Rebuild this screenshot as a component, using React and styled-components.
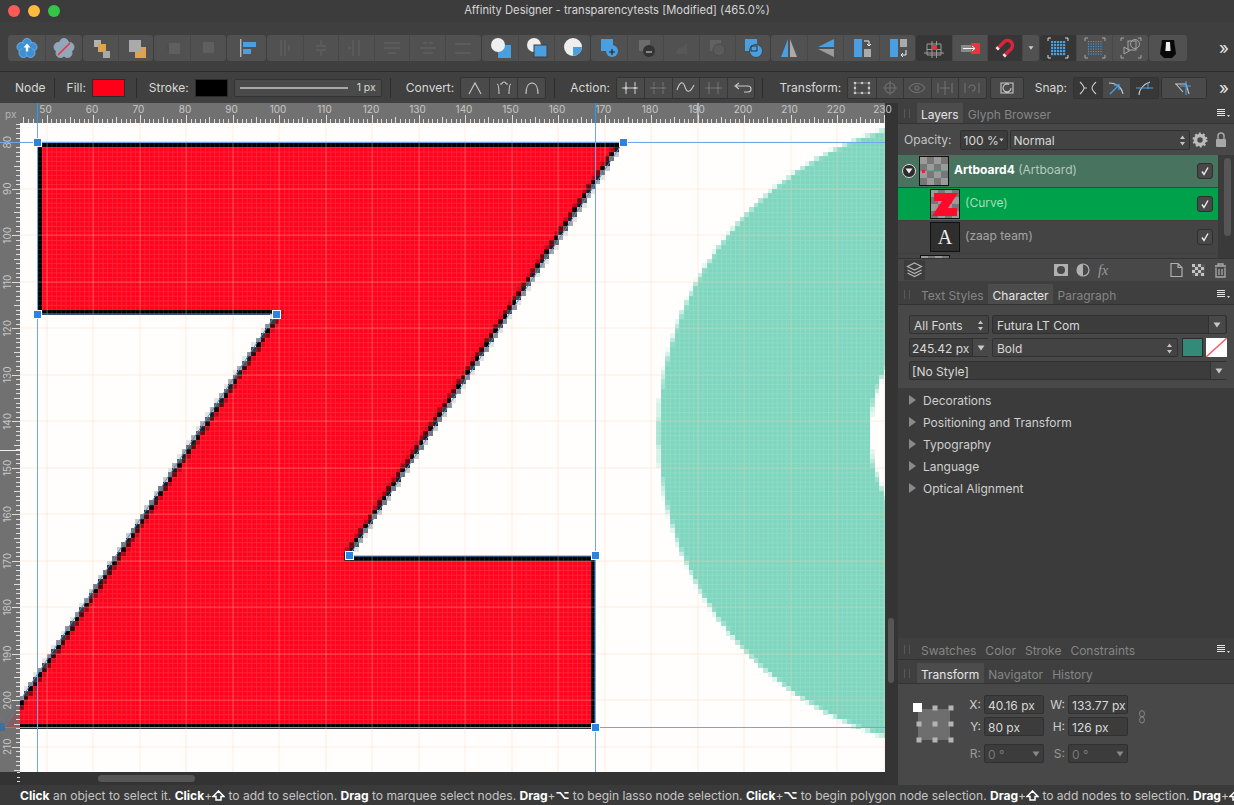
import React from 'react';
import styled, {createGlobalStyle} from 'styled-components';

const GlobalStyle = createGlobalStyle`
  html, body { margin: 0; padding: 0; background: #3a3a3a; }
  body { font-family: Inter, "Noto Sans", sans-serif; font-size: 12px; color: #d0d0d0; }
`;

const Window = styled.div`
  width: 1234px;
  height: 805px;
  display: flex;
  flex-direction: column;
  overflow: hidden;
  background: #3d3d3d;
`;

const TitleBar = styled.div`
  height: 22px;
  flex: none;
  box-sizing: border-box;
  padding-bottom: 2px;
  display: flex;
  align-items: center;
  justify-content: center;
  position: relative;
  background: #3c3c3c;
  color: #d6d6d6;
  font-size: 11.2px;
`;

const Lights = styled.div`
  position: absolute;
  left: 8px;
  top: 5px;
  display: flex;
  gap: 8px;
`;

const Light = styled.span`
  width: 12px;
  height: 12px;
  border-radius: 50%;
  background: ${p => p.$c};
`;

const Toolbar = styled.div`
  height: 50px;
  flex: none;
  box-sizing: border-box;
  padding: 13px 0 11px 8px;
  display: flex;
  gap: 1px;
  background: #3f3f3f;
  border-bottom: 1px solid #2d2d2d;
`;

const ToolGroup = styled.div`
  display: flex;
  flex: none;
  height: 26px;
  border-radius: 3px;
  overflow: hidden;
  background: #515151;
`;

const ToolButton = styled.div`
  width: ${p => p.$w}px;
  flex: none;
  box-sizing: border-box;
  display: flex;
  align-items: center;
  justify-content: center;
  background: ${p => (p.$dark ? '#363636' : 'transparent')};
  & + & { border-left: 1px solid #474747; }
`;

const More = styled.div`
  margin-left: auto;
  width: 15px;
  flex: none;
  color: #e8e8e8;
  font-size: 17px;
  line-height: 26px;
`;

const ContextBar = styled.div`
  height: 31px;
  flex: none;
  box-sizing: border-box;
  display: flex;
  align-items: center;
  background: #404040;
  color: #d8d8d8;
  font-size: 12px;
`;

const Label = styled.span`
  flex: none;
  margin-left: ${p => p.$l || 0}px;
  margin-right: ${p => p.$r ?? 6}px;
  white-space: nowrap;
`;

const Sep = styled.span`
  width: 1px;
  height: 20px;
  flex: none;
  margin-left: ${p => p.$l}px;
  background: #2c2c2c;
`;

const Swatch = styled.span`
  width: ${p => p.$w || 33}px;
  height: ${p => p.$h || 18}px;
  margin-left: ${p => p.$l || 0}px;
  flex: none;
  box-sizing: border-box;
  background: ${p => p.$c};
  border: 1px solid #2a2a2a;
`;

const StrokeBox = styled.div`
  width: 148px;
  height: 18px;
  flex: none;
  box-sizing: border-box;
  margin-left: 6px;
  padding: 0 5px;
  display: flex;
  align-items: center;
  gap: 9px;
  background: #4a4a4a;
  border: 1px solid #333;
  border-radius: 2px;
  font-size: 10.5px;
  white-space: nowrap;
`;

const StrokeLine = styled.span`
  flex: 1;
  height: 2px;
  background: #a8a8a8;
`;

const ActionGroup = styled.div`
  display: flex;
  flex: none;
  height: 20px;
  margin-left: ${p => p.$l || 0}px;
  background: ${p => p.$bg || '#4a4a4a'};
  border: 1px solid #333;
  border-radius: 2px;
`;

const ActionButton = styled.div`
  width: ${p => p.$w}px;
  flex: none;
  box-sizing: border-box;
  display: flex;
  align-items: center;
  justify-content: center;
  background: ${p => (p.$dark ? '#383838' : 'transparent')};
  & + & { border-left: 1px solid #363636; }
`;

const Main = styled.div`
  flex: 1;
  min-height: 0;
  display: flex;
`;

const Workspace = styled.div`
  width: 885px;
  flex: none;
  display: grid;
  grid-template-columns: 20px 865px;
  grid-template-rows: 20px 649px 13px;
`;

const Corner = styled.div`
  background: #717171;
  color: #b4b4b4;
  font-size: 10px;
  padding: 5px 0 0 5px;
`;

const RulerSvg = styled.svg`
  display: block;
  position: relative;
  z-index: 1;
  overflow: visible;
  background: #717171;
`;

const ScrollRow = styled.div`
  grid-column: 1 / 3;
  background: #333;
  display: flex;
  align-items: center;
`;

const RulerStub = styled.div`
  width: 3px;
  height: 13px;
  margin-left: 17px;
  background: repeating-linear-gradient(#ddd 0 1px, transparent 1px 4.65px);
`;

const ScrollThumb = styled.div`
  width: 97px;
  height: 7px;
  margin-left: 78px;
  border-radius: 4px;
  background: #565656;
`;

const Strip = styled.div`
  width: 13px;
  flex: none;
  background: #343434;
  display: flex;
  justify-content: flex-start;
  padding-top: 515px;
  box-sizing: border-box;
`;

const StripThumb = styled.div`
  width: 6px;
  height: 65px;
  margin-left: 3px;
  border-radius: 3px;
  background: #555;
`;

const Panels = styled.div`
  width: 336px;
  flex: none;
  display: flex;
  flex-direction: column;
  background: #484848;
`;

const TabBar = styled.div`
  height: ${p => p.$h}px;
  flex: none;
  box-sizing: border-box;
  display: flex;
  align-items: flex-end;
  padding-left: 6px;
  background: #3f3f3f;
  border-bottom: 1px solid #333;
`;

const Grip = styled.span`
  width: 4px;
  height: 9px;
  flex: none;
  margin: 0 6.5px 5px 0;
  border-left: 1px solid #575757;
  border-right: 1px solid #575757;
`;

const Tab = styled.div`
  height: 20px;
  box-sizing: border-box;
  padding: 2px 4.5px 0;
  display: flex;
  align-items: center;
  color: ${p => (p.$active ? '#e6e6e6' : '#858585')};
  background: ${p => (p.$active ? '#4c4c4c' : 'transparent')};
  white-space: nowrap;
`;

const MenuGlyph = styled.span`
  margin: 0 4px 5px auto;
  display: block;
  line-height: 0;
`;

const OpacityRow = styled.div`
  height: 31px;
  flex: none;
  box-sizing: border-box;
  display: flex;
  align-items: center;
  padding-left: 6px;
  background: #484848;
`;

const OpacityLabel = styled.span`
  margin-right: 8px;
  color: #c4c4c4;
`;

const Field = styled.div`
  width: ${p => (p.$w ? `${p.$w}px` : 'auto')};
  flex: ${p => (p.$w ? 'none' : 1)};
  height: ${p => p.$h || 19}px;
  box-sizing: border-box;
  padding: 1px ${p => p.$pad ?? 3}px 0;
  margin-left: ${p => p.$l || 0}px;
  display: flex;
  align-items: center;
  justify-content: space-between;
  background: ${p => p.$bg || '#3c3c3c'};
  color: ${p => p.$c || '#d8d8d8'};
  border: 1px solid #303030;
  border-radius: 2px;
  white-space: nowrap;
`;

const Drop = styled.span`
  width: 16px;
  align-self: stretch;
  margin: -1px -3px 0 0;
  display: flex;
  align-items: center;
  justify-content: center;
  border-left: 1px solid #303030;
  background: #484848;
`;

const LayerList = styled.div`
  height: 103px;
  flex: none;
  display: flex;
  overflow: hidden;
  background: #3f3f3f;
`;

const LayerRows = styled.div`
  width: 320px;
`;

const LayerRow = styled.div`
  height: 32px;
  margin-bottom: 1px;
  box-sizing: border-box;
  display: flex;
  align-items: center;
  padding-left: ${p => p.$indent}px;
  background: ${p => p.$bg};
`;

const Disclosure = styled.span`
  width: 12px;
  height: 12px;
  margin-right: 3px;
  flex: none;
  border: 1.5px solid #ddd;
  border-radius: 50%;
  background: #2c2c2c;
  display: flex;
  align-items: center;
  justify-content: center;
`;

const Thumb = styled.span`
  width: 30px;
  height: 30px;
  flex: none;
  box-sizing: border-box;
  border: 1px solid #111;
  display: flex;
  align-items: center;
  justify-content: center;
  background: ${p => (p.$plain ? '#2e2e2e' : 'repeating-conic-gradient(#777 0 25%, #9b9b9b 0 50%) 0 0 / 14px 14px')};
  color: #eee;
  font-family: "Liberation Serif", serif;
  font-size: 20px;
`;

const LayerName = styled.span`
  margin: 0 0 3px 5px;
  color: ${p => p.$c};
  white-space: nowrap;
  & b { color: #fff; font-weight: 700; }
`;

const Check = styled.span`
  margin: 0 5px 0 auto;
  width: 14px;
  height: 14px;
  flex: none;
  border-radius: 3px;
  background: #484848;
  border: 1px solid #2f2f2f;
  display: flex;
  align-items: center;
  justify-content: center;
`;

const ListScroll = styled.div`
  width: 16px;
  background: #3a3a3a;
`;

const ListThumb = styled.div`
  width: 7px;
  height: 78px;
  margin: 3px 0 0 6px;
  border-radius: 4px;
  background: #565656;
`;

const LayerFooter = styled.div`
  height: 23px;
  flex: none;
  display: flex;
  align-items: center;
  gap: 5px;
  padding-right: 5px;
  background: #484848;
  border-top: 1px solid #333;
  box-sizing: border-box;
`;

const StackButton = styled.span`
  width: 21px;
  height: 20px;
  margin: 0 auto 0 6px;
  background: #3c3c3c;
  display: flex;
  align-items: center;
  justify-content: center;
`;

const FootSpacer = styled.span`
  width: 44px;
`;

const CharBody = styled.div`
  height: 83px;
  flex: none;
  box-sizing: border-box;
  padding: 10px 7px 0 11px;
  display: flex;
  flex-direction: column;
  gap: 4px;
  background: #484848;
`;

const CharRow = styled.div`
  display: flex;
`;

const NoFill = styled.svg`
  margin-left: 3px;
  flex: none;
`;

const Expanders = styled.div`
  flex: 1;
  padding-top: 1px;
  background: #3b3b3b;
`;

const ExpanderRow = styled.div`
  height: 22px;
  display: flex;
  align-items: center;
  padding-left: 11px;
  color: #cfcfcf;
  &::before {
    content: '';
    margin-right: 7px;
    border-left: 7px solid #8a8a8a;
    border-top: 5px solid transparent;
    border-bottom: 5px solid transparent;
  }
`;

const TransformBody = styled.div`
  height: 101px;
  flex: none;
  box-sizing: border-box;
  display: flex;
  align-items: flex-start;
  padding: 11px 0 0 15px;
  background: #484848;
`;

const RefPoint = styled.svg`
  margin-top: 7px;
  flex: none;
`;

const Fields = styled.div`
  margin-left: 13px;
  display: grid;
  grid-template-columns: 14px 60px 18px 60px;
  grid-auto-rows: 19px;
  column-gap: 3px;
  row-gap: 3px;
  align-items: center;
  justify-items: end;
`;

const AxisLabel = styled.span`
  color: ${p => (p.$off ? '#9a9a9a' : '#cfcfcf')};
  margin-top: ${p => (p.$low ? 10 : 0)}px;
`;

const LowField = styled(Field)`
  margin-top: 10px;
  width: 60px;
`;

const LinkIcon = styled.span`
  margin: 15px 0 0 11px;
  line-height: 0;
`;

const StatusBar = styled.div`
  height: 20px;
  flex: none;
  box-sizing: border-box;
  padding-left: 20px;
  display: flex;
  align-items: center;
  background: #3a3a3a;
  color: #c4c4c4;
  font-size: 12.05px;
  white-space: pre;
  overflow: hidden;
  & b { color: #fff; font-weight: 700; }
  & i { font-style: normal; font-family: "DejaVu Sans", sans-serif; color: #fff; font-weight: 700; }
`;

const ShiftSvg = styled.svg`
  flex: none;
`;

const BLUE = '#4a9fe0';
const ORANGE = '#dfa24f';
const DIM = '#5f5f5f';

const I = ({w = 26, h = 22, children}) => (
  <svg width={w} height={h} viewBox="0 0 26 22">{children}</svg>
);

const Flower = ({fill, stroke}) => (
  <g fill={fill} stroke={stroke}>
    <circle cx="13" cy="6" r="4.5" />
    <circle cx="7.5" cy="10" r="4.5" />
    <circle cx="18.5" cy="10" r="4.5" />
    <circle cx="9.5" cy="16" r="4.5" />
    <circle cx="16.5" cy="16" r="4.5" />
    <circle cx="13" cy="11" r="5" stroke="none" />
  </g>
);

const Squares = ({list}) => list.map(([x, y, s, c], i) => <rect key={i} x={x} y={y} width={s} height={s} fill={c} />);

const lines = (d, c = DIM) => <path d={d} fill="none" stroke={c} strokeWidth="1.4" />;

const toolIcons = {
  flowerUp: <><Flower fill="#3f8fd3" stroke="#6aaee4" /><path d="M13 6.5l-3.5 4h2.3v4h2.4v-4h2.3z" fill="#fff" /></>,
  flowerOff: <><Flower fill="#93a7ba" stroke="#93a7ba" /><path d="M7 18L19 6" stroke="#e8353b" strokeWidth="1.6" /></>,
  forward: <Squares list={[[6, 3, 7, '#b2b2b2'], [10, 7, 8, ORANGE], [15, 14, 7, '#a9a9a9']]} />,
  front: <Squares list={[[12, 10, 11, ORANGE], [6, 3, 12, '#aaa']]} />,
  dimA: <Squares list={[[7, 8, 5, '#4e4e4e'], [10, 6, 11, DIM]]} />,
  dimB: <Squares list={[[7, 5, 11, DIM]]} />,
  align: <><rect x="6" y="2" width="1.4" height="18" fill="#b5b5b5" /><rect x="9" y="5" width="13" height="5" fill={BLUE} /><rect x="9" y="12" width="8" height="5" fill={BLUE} /></>,
  disV1: lines('M9 3v16M13 3v16M17 8v6'),
  disV2: lines('M13 3v5M13 14v5M8 9h10M8 13h10'),
  disV3: lines('M10 3v16M16 3v16M5 11h3'),
  disH1: lines('M5 6h16M5 11h16M9 16h8'),
  disH2: lines('M8 6h4M14 6h4M5 11h16M8 16h10'),
  disH3: lines('M5 7h16M5 16h16'),
  shapeA: <><rect x="11" y="8" width="13" height="13" fill={BLUE} /><circle cx="11" cy="8" r="7" fill="#eee" /></>,
  shapeB: <><circle cx="10" cy="8" r="7" fill="#eee" /><rect x="10" y="8" width="13" height="12" fill={BLUE} stroke="#3f3f3f" /></>,
  shapeC: <><circle cx="13" cy="10" r="9" fill="#eee" /><path d="M13 10h9a9 9 0 0 1-9 9z" fill={BLUE} /></>,
  add: <><rect x="5" y="2" width="12" height="12" fill={BLUE} /><circle cx="16" cy="14" r="6" fill={BLUE} /><path d="M13 15h6M16 12v6" stroke="#222" strokeWidth="1.2" /></>,
  sub: <><rect x="6" y="3" width="11" height="11" fill="#6c6c6c" /><circle cx="16" cy="14" r="6" fill="#333" /><path d="M13 15h6" stroke="#ddd" strokeWidth="1.2" /></>,
  dim1: <path d="M19 5v12H8a7 7 0 0 1 7-7z" fill="#585858" />,
  dim2: <><rect x="6" y="3" width="11" height="11" fill="#626262" /><circle cx="15" cy="13" r="6" fill="#5a5a5a" stroke="#4a4a4a" /></>,
  xor: <><rect x="5" y="2" width="12" height="12" fill={BLUE} /><circle cx="16" cy="14" r="6.5" fill={BLUE} stroke="#444" /><path d="M11 9h6v5h-6z" fill="none" stroke="#333" /></>,
  mirrorH: <><path d="M12 2v18H5z" fill={BLUE} /><path d="M14 2v18h7z" fill="#aaa" /></>,
  mirrorV: <><path d="M21 2v8H5z" fill={BLUE} /><path d="M21 20v-8H5z" fill="#9b9b9b" /></>,
  rotR: <><rect x="5" y="2" width="8" height="18" fill={BLUE} /><rect x="15" y="12" width="7" height="8" fill="#aaa" /><path d="M15 4h5v5M18 7l2 2 2-2" fill="none" stroke="#eee" /></>,
  rotL: <><rect x="5" y="2" width="8" height="18" fill={BLUE} /><rect x="15" y="2" width="7" height="8" fill="#aaa" /><path d="M21 13v5h-5M18 16l-2 2 2 2" fill="none" stroke="#eee" /></>,
  snapGrid: <><path d="M6 7h14v11H6zM6 12.5h14M11 4v17M15.5 4v17M3 16h20" fill="none" stroke="#9a9a9a" /><rect x="11" y="8" width="5" height="5" fill="#e8343f" /></>,
  snapTo: <><rect x="4" y="8" width="13" height="7" fill="#8a8a8a" /><rect x="14" y="6" width="9" height="11" fill="#e8343f" /><path d="M6 11.5h12M15 9l3 2.5-3 2.5" fill="none" stroke="#fff" /></>,
  magnet: <><path d="M4.700 12.300L12.500 4.500A5 5 0 0 1 19.500 11.500L11.700 19.300" fill="none" stroke="#d8253d" strokeWidth="3.500" /><path d="M4.700 12.300L6.500 10.500M11.700 19.300L13.500 17.500" stroke="#e4e4e4" strokeWidth="3.500" /></>,
  down: <path d="M9 8h8l-4 6z" fill="#ccc" />,
  dots: <><g fill={BLUE}>{[7, 10, 13, 16, 19].flatMap(x => [5, 8, 11, 14, 17].map(y => <rect key={`${x}${y}`} x={x - 1} y={y - 1} width="2.2" height="2.2" />))}</g><path d="M3 4V1h3M23 4V1h-3M3 18v3h3M23 18v3h-3" fill="none" stroke="#ddd" /></>,
  dotsFine: <><g fill={BLUE}>{[6.5, 9, 11.500, 14, 16.500, 19].flatMap(x => [4.500, 7, 9.500, 12, 14.500, 17].map(y => <rect key={`${x}${y}`} x={x - .5} y={y - .5} width="1.1" height="1.1" />))}</g><path d="M3 4V1h3M23 4V1h-3M3 18v3h3M23 18v3h-3" fill="none" stroke="#aaa" /></>,
  boxes: <g fill="none" stroke="#a5a5a5"><path d="M3 4V1h3M23 4V1h-3M3 18v3h3M23 18v3h-3" /><circle cx="17" cy="7" r="4.5" /><rect x="10" y="4" width="8" height="9" /><path d="M6 10v7l6-3.5z" /></g>,
  lamp: <><path d="M7 3h12l2 14-4 4H9l-4-4z" fill="#080808" /><path d="M11 5h4l.6 9h-5.2z" fill="#eee" /></>,
};

const toolGroups = [
  {w: 37, icons: ['flowerUp', 'flowerOff']},
  {w: 35, icons: ['forward', 'front']},
  {w: 36, icons: ['dimA', 'dimB']},
  {w: 39, icons: ['align']},
  {w: 35.6, icons: ['disV1', 'disV2', 'disV3', 'disH1', 'disH2', 'disH3']},
  {w: 36.3, icons: ['shapeA', 'shapeB', 'shapeC']},
  {w: 35.8, icons: ['add', 'sub', 'dim1', 'dim2', 'xor']},
  {w: 36, icons: ['mirrorH', 'mirrorV', 'rotR', 'rotL']},
  {w: 35.3, icons: ['snapGrid', 'snapTo', 'magnet'], dark: [0, 2], extra: 'down'},
  {w: 36, icons: ['dots', 'dotsFine', 'boxes'], dark: [0]},
  {w: 38, icons: ['lamp']},
];

const L = '#c9c9c9';
const Off = '#707070';

// parts: [colour, path, stroke width]; a path of zero-length strokes gives round handles
const Glyph = ({parts}) => (
  <svg width="22" height="16" viewBox="0 0 22 16">
    {parts.map(([c, d, w = 1.1]) => (
      <path key={d} d={d} fill="none" stroke={c} strokeWidth={w} strokeLinecap={w > 2 ? 'round' : 'butt'} />
    ))}
  </svg>
);

const convertIcons = [
  [[L, 'M5 14L11 3l6 11']],
  [[L, 'M4 4c2 0 2 10 2 10M7 4h2M13 4h2M18 4c-2 0-2 10-2 10'], [L, 'M9 4a2 2 0 0 1 4 0']],
  [[L, 'M5 14c0-6 2-11 6-11s6 5 6 11']],
];
const actionIcons = [
  [[L, 'M6 2v12M15 2v4M15 10v4M2 8h16'], [L, 'M6 8h.01M15 8h.01', 3]],
  [[Off, 'M6 2v4M6 10v4M15 2v4M15 10v4M2 8h16'], [Off, 'M6 8h.01M15 8h.01', 2.6]],
  [[L, 'M2 10c3-9 6-9 8-3s5 6 9-2']],
  [[Off, 'M6 2v12M15 2v12M2 8h17'], [Off, 'M6 8h.01M15 8h.01', 2.6]],
  [[L, 'M18 6H6M9 3L5 6l4 3M18 6a3 3 0 0 1 0 6h-4']],
];
const transformIcons = [
  [[L, 'M4 3h14M4 13h14M4 3v10M18 3v10', .5], [L, 'M4 3h.01M11 3h.01M18 3h.01M4 13h.01M11 13h.01M18 13h.01M4 8h.01M18 8h.01', 2.6]],
  [[Off, 'M11 1v14M4 8h14M16 8a5 5 0 1 1-10 0a5 5 0 1 1 10 0']],
  [[Off, 'M3 8c4-6 12-6 16 0c-4 6-12 6-16 0M13 8a2 2 0 1 1-4 0a2 2 0 1 1 4 0']],
  [[Off, 'M4 3v10M18 3v10M11 1v14M6 8h10']],
  [[Off, 'M4 3v10M18 3v10M8 8a3 3 0 1 1 3 3']],
];
const snapIcons = [
  [[L, 'M3 2c3 3 4 4 4 6s-1 3-4 6M19 2c-3 3-4 4-4 6s1 3 4 6M7 8h3']],
  [[L, 'M3 3c8 0 13 5 14 11'], [BLUE, 'M4 14L13 5M8 5h5v5', 1.3]],
  [[L, 'M5 15c0-6 5-11 11-13'], [BLUE, 'M2 8h17M14 2v7', 1.1]],
  [[L, 'M2 4h11l3 10M3 4l7 8'], [BLUE, 'M13 1v14M7 6h11', 1.1]],
];

const STEP = 4.65;
const OX = 0.3;
const OY = 142.3 - 31 * STEP;
const COLS = 191;
const ROWS = 170;

const zPts = [[37.5, 142.3], [623, 142.3], [349, 556], [595, 556], [595, 727.7], [2, 727.7], [276, 314], [37.5, 314]];

const inPoly = (x, y) => {
  let hit = false;
  for (let i = 0, j = zPts.length - 1; i < zPts.length; j = i++) {
    const [xi, yi] = zPts[i];
    const [xj, yj] = zPts[j];
    if ((yi > y) !== (yj > y) && x < ((xj - xi) * (y - yi)) / (yj - yi) + xi) hit = !hit;
  }
  return hit;
};

const edgeDist = (x, y) => {
  let best = 1e9;
  for (let i = 0, j = zPts.length - 1; i < zPts.length; j = i++) {
    const [ax, ay] = zPts[j];
    const [bx, by] = zPts[i];
    const dx = bx - ax;
    const dy = by - ay;
    const t = Math.max(0, Math.min(1, ((x - ax) * dx + (y - ay) * dy) / (dx * dx + dy * dy)));
    best = Math.min(best, Math.hypot(x - ax - t * dx, y - ay - t * dy));
  }
  return best;
};

const inTeal = (x, y) => {
  const outer = Math.hypot(x - 974, y - 433) < 316;
  const hole = Math.hypot(x - 1001, y - 433) < 131.5;
  return outer && !hole;
};

// one colour per art pixel, neighbours of the same colour merged into one rect
const rasterCells = () => {
  const out = [];
  for (let r = 0; r < ROWS; r++) {
    let run = null;
    for (let c = 0; c <= COLS; c++) {
      const x0 = OX + c * STEP;
      const y0 = OY + r * STEP;
      let red = 0, black = 0, teal = 0;
      for (let a = 0; a < 3; a++) {
        for (let b = 0; b < 3; b++) {
          const sx = x0 + (a + .5) * STEP / 3;
          const sy = y0 + (b + .5) * STEP / 3;
          if (inPoly(sx, sy)) {
            if (edgeDist(sx, sy) < STEP) black++;
            else red++;
          } else if (inTeal(sx, sy)) teal++;
        }
      }
      const w = 9 - red - black - teal;
      const ch = (cr, ct, cw) => Math.round((cr * red + ct * teal + cw * w) / 9);
      const color = w === 9 ? null : `rgb(${ch(255, 127, 255)},${ch(4, 214, 254)},${ch(28, 191, 252)})`;
      if (run && run.color === color) {
        run.n++;
      } else {
        if (run && run.color) out.push(run);
        run = {color, c, r, n: 1};
      }
    }
    if (run && run.color) out.push(run);
  }
  return out;
};

const cells = rasterCells();

const nodes = [[37.5, 142.5], [623, 142.5], [37.5, 314], [276, 314], [349, 555.5], [595, 555.5], [595, 727.5]];
const rangeOf = (a, b) => Array.from({length: b - a + 1}, (_, i) => a + i);

const MAJOR = 'rgba(255,200,170,.16)';

const ArtSvg = styled.svg`
  display: block;
`;

const Artwork = () => (
  <ArtSvg width="865" height="649" viewBox="20 123 865 649" shapeRendering="crispEdges">
    <defs>
      <pattern id="cell" x={OX} y={OY} width={STEP} height={STEP} patternUnits="userSpaceOnUse">
        <path d={`M0 0H${STEP}M0 0V${STEP}`} stroke="rgba(255,255,255,.12)" strokeWidth="1.4" fill="none" />
      </pattern>
    </defs>
    <rect x="20" y="123" width="865" height="649" fill="#fffefd" />
    {cells.map(({color, c, r, n}, i) => (
      <rect key={i} x={OX + c * STEP} y={OY + r * STEP} width={n * STEP + .3} height={STEP + .3} fill={color} />
    ))}
    <rect x="20" y="123" width="865" height="649" fill="url(#cell)" />
    {rangeOf(1, 19).map(u => <path key={u} d={`M${u * 46.5} 123V772`} stroke={MAJOR} strokeWidth="2" />)}
    {rangeOf(0, 13).map(u => <path key={u} d={`M20 ${142.3 + u * 46.5}H885`} stroke={MAJOR} strokeWidth="2" />)}
    <g shapeRendering="auto" fill="none" stroke="#4f90d8" strokeWidth="1">
      <path d={`M${zPts.map(p => p.join(' ')).join('L')}Z`} />
      <path d="M20 142.5H885M20 727.5H885M37.5 123V772M595.5 123V772" stroke="#6fa6e3" />
    </g>
    {nodes.map(([x, y]) => (
      <rect key={`${x}-${y}`} x={x - 4} y={y - 4} width="8" height="8" fill="#2a84e0" stroke="#fff" />
    ))}
  </ArtSvg>
);

const TopRuler = () => (
  <RulerSvg width="865" height="20" viewBox="20 0 865 20">
    <path d="M698 0v20" stroke="#f0f0f0" />
    {rangeOf(45, 230).map(u => {
      const x = Math.round((u - 40) * STEP) + .5;
      const len = u % 10 === 0 ? 8 : u % 5 === 0 ? 6 : 4;
      return <path key={u} d={`M${x} 20v-${len}`} stroke="#dedede" />;
    })}
    {rangeOf(5, 23).map(t => (
      <text key={t} x={(t * 10 - 40) * STEP - 1} y="10" fontSize="10" textAnchor="middle" fill="#c6c6c6" fontFamily="Inter, sans-serif">{t * 10}</text>
    ))}
    <path d="M37.5 0v20M595.5 0v20" stroke="#2a9bf0" strokeWidth="1.2" />
  </RulerSvg>
);

const LeftRuler = () => (
  <RulerSvg width="20" height="649" viewBox="0 123 20 649">
    <path d="M6 727L20 706V727Z" fill="#8a5a5c" />
    <path d="M0 727.5H20" stroke="#4f90d8" />
    <rect x="0" y="723" width="5" height="8" fill="#3d6f9e" />
    <path d="M2 727L20 700" stroke="#5e6f88" />
    <path d="M0 450.5H20" stroke="#f0f0f0" />
    {rangeOf(76, 215).map(u => {
      const y = Math.round(142.3 + (u - 80) * STEP) + .5;
      const len = u % 10 === 0 ? 8 : u % 5 === 0 ? 6 : 4;
      return <path key={u} d={`M20 ${y}h-${len}`} stroke="#dedede" />;
    })}
    {rangeOf(8, 21).map(t => {
      const y = 142.3 + (t * 10 - 80) * STEP;
      return (
        <text key={t} fontSize="10" fill="#c6c6c6" textAnchor="middle" fontFamily="Inter, sans-serif" transform={`translate(11 ${y}) rotate(-90)`}>{t * 10}</text>
      );
    })}
    <path d="M0 142.5H20" stroke="#6fa6e3" />
  </RulerSvg>
);

const Tick = () => (
  <svg width="10" height="10" viewBox="0 0 10 10">
    <path d="M2 5.5l2 3 4-7" fill="none" stroke="#eee" strokeWidth="1.4" />
  </svg>
);

const Menu = () => (
  <MenuGlyph>
    <svg width="13" height="9" viewBox="0 0 13 9">
      <path d="M0 .5h8M0 2.5h8M0 4.5h8M0 6.5h8" stroke="#e4e4e4" />
      <path d="M10 6h3l-1.500 2z" fill="#ddd" />
    </svg>
  </MenuGlyph>
);

const FootIcon = ({children, w = 17}) => (
  <svg width={w} height="16" viewBox="0 0 17 16">{children}</svg>
);

const UpDown = () => (
  <svg width="7" height="11" viewBox="0 0 7 11">
    <path d="M3.500 0.500L6 4H1zM3.500 10.500L6 7H1z" fill="#c4c4c4" />
  </svg>
);

const DownTri = ({c = '#c8c8c8'}) => (
  <svg width="8" height="6" viewBox="0 0 8 6">
    <path d="M0.500 0.500h7L4 5.500z" fill={c} />
  </svg>
);

const Shift = () => (
  <ShiftSvg width="13" height="11" viewBox="0 0 13 11">
    <path d="M6.500 1L1 6.500H4V10H9V6.500H12Z" fill="none" stroke="#fff" strokeWidth="1.500" />
  </ShiftSvg>
);

export default function App() {
  return (
    <Window>
      <GlobalStyle />
      <TitleBar>
        <Lights>
          <Light $c="#fc5b57" />
          <Light $c="#fdbc40" />
          <Light $c="#33c748" />
        </Lights>
        Affinity Designer - transparencytests [Modified] (465.0%)
      </TitleBar>

      <Toolbar>
        {toolGroups.map((g, gi) => (
          <ToolGroup key={gi}>
            {g.icons.map((name, i) => (
              <ToolButton key={name} $w={g.w} $dark={g.dark && g.dark.includes(i)}>
                <I>{toolIcons[name]}</I>
              </ToolButton>
            ))}
            {g.extra && <ToolButton $w={17}><I w={17} h={22}>{toolIcons[g.extra]}</I></ToolButton>}
          </ToolGroup>
        ))}
        <More>»</More>
      </Toolbar>

      <ContextBar>
        <Label $l={15} $r={0}>Node</Label>
        <Sep $l={8} />
        <Label $l={12}>Fill:</Label>
        <Swatch $c="#ff0018" />
        <Sep $l={11} />
        <Label $l={12}>Stroke:</Label>
        <Swatch $c="#000" />
        <StrokeBox><StrokeLine />1 px</StrokeBox>
        <Sep $l={8} />
        <Label $l={15}>Convert:</Label>
        <ActionGroup>
          {convertIcons.map((parts, i) => <ActionButton key={i} $w={28}><Glyph parts={parts} /></ActionButton>)}
        </ActionGroup>
        <Sep $l={8} />
        <Label $l={15}>Action:</Label>
        <ActionGroup>
          {actionIcons.map((parts, i) => <ActionButton key={i} $w={27.5}><Glyph parts={parts} /></ActionButton>)}
        </ActionGroup>
        <Sep $l={7} />
        <Label $l={16}>Transform:</Label>
        <ActionGroup>
          {transformIcons.map((parts, i) => <ActionButton key={i} $w={27.5}><Glyph parts={parts} /></ActionButton>)}
        </ActionGroup>
        <ActionGroup $l={3}>
          <ActionButton $w={32}><Glyph parts={[[L, 'M5 3h12v10H5zM15 8a4 4 0 1 1-2-3.500M7 8a4 4 0 0 0 6 3.500']]} /></ActionButton>
        </ActionGroup>
        <Label $l={11}>Snap:</Label>
        <ActionGroup>
          {snapIcons.slice(0, 3).map((parts, i) => <ActionButton key={i} $w={28} $dark={i !== 1}><Glyph parts={parts} /></ActionButton>)}
        </ActionGroup>
        <ActionGroup $l={2}>
          <ActionButton $w={44}><Glyph parts={snapIcons[3]} /></ActionButton>
        </ActionGroup>
        <More>»</More>
      </ContextBar>

      <Main>
        <Workspace>
          <Corner>px</Corner>
          <TopRuler />
          <LeftRuler />
          <Artwork />
          <ScrollRow>
            <RulerStub />
            <ScrollThumb />
          </ScrollRow>
        </Workspace>
        <Strip><StripThumb /></Strip>

        <Panels>
          <TabBar $h={21}>
            <Grip />
            <Tab $active>Layers</Tab>
            <Tab>Glyph Browser</Tab>
            <Menu />
          </TabBar>
          <OpacityRow>
            <OpacityLabel>Opacity:</OpacityLabel>
            <Field $w={48} $h={20}>100 %<DownTri /></Field>
            <Field $w={180} $h={20} $l={2} $bg="#434343">Normal<UpDown /></Field>
            <svg width="44" height="18" viewBox="0 0 44 18">
              <circle cx="10" cy="9" r="4.500" fill="none" stroke="#bbb" strokeWidth="3.500" />
              <circle cx="10" cy="9" r="6.500" fill="none" stroke="#bbb" strokeWidth="2" strokeDasharray="2 2.100" />
              <rect x="26" y="8" width="10" height="8" rx="1" fill="#a8a8a8" />
              <path d="M28 8V5a3 3 0 0 1 6 0v3" fill="none" stroke="#a8a8a8" strokeWidth="1.500" />
            </svg>
          </OpacityRow>
          <LayerList>
            <LayerRows>
              <LayerRow $indent={4} $bg="#47735f">
                <Disclosure><DownTri c="#eee" /></Disclosure>
                <Thumb>
                  <svg width="28" height="28" viewBox="0 0 28 28">
                    <path d="M7 14h20" stroke="#3f9d84" />
                    <rect x="2" y="13" width="3" height="3" fill="#d12a40" />
                  </svg>
                </Thumb>
                <LayerName $c="#b5cabe"><b>Artboard4</b> (Artboard)</LayerName>
                <Check><Tick /></Check>
              </LayerRow>
              <LayerRow $indent={32} $bg="#00a14b">
                <Thumb>
                  <svg width="28" height="28" viewBox="0 0 28 28">
                    <path d="M3 3H27L17 18H26V26H1L11 11H3Z" fill="#ff0a28" />
                  </svg>
                </Thumb>
                <LayerName $c="#a8dcbc">(Curve)</LayerName>
                <Check><Tick /></Check>
              </LayerRow>
              <LayerRow $indent={32} $bg="#444">
                <Thumb $plain>A</Thumb>
                <LayerName $c="#a4a4a4">(zaap team)</LayerName>
                <Check><Tick /></Check>
              </LayerRow>
              <LayerRow $indent={22} $bg="#444"><Thumb /></LayerRow>
            </LayerRows>
            <ListScroll><ListThumb /></ListScroll>
          </LayerList>
          <LayerFooter>
            <StackButton>
              <FootIcon>
                <path d="M8.500 1l7 3.500-7 3.500-7-3.500zM1.500 8l7 3.500 7-3.500M1.500 11l7 3.500 7-3.500" fill="none" stroke="#b5b5b5" strokeWidth="1.200" />
              </FootIcon>
            </StackButton>
            <FootIcon><rect x="1" y="2" width="14" height="12" fill="#b0b0b0" /><circle cx="8" cy="8" r="4" fill="#484848" /></FootIcon>
            <FootIcon><circle cx="8" cy="8" r="6" fill="none" stroke="#b0b0b0" strokeWidth="1.200" /><path d="M8 2a6 6 0 0 0 0 12z" fill="#b0b0b0" /></FootIcon>
            <FootIcon><text x="1" y="13" fontSize="14" fontStyle="italic" fontFamily="Liberation Serif, serif" fill="#9c9c9c">fx</text></FootIcon>
            <FootSpacer />
            <FootIcon><path d="M3 1.500h7l4 4v9H3zM10 1.500v4h4" fill="none" stroke="#b0b0b0" strokeWidth="1.200" /></FootIcon>
            <FootIcon><rect x="2" y="2" width="13" height="12" fill="#555" /><path d="M2 2h3v3H2zM8 2h3v3H8zM5 5h3v3H5zM11 5h3v3h-3zM2 8h3v3H2zM8 8h3v3H8zM5 11h3v3H5zM11 11h3v3h-3z" fill="#c4c4c4" /></FootIcon>
            <FootIcon><path d="M3 4h11M6 4V2h5v2M4 5.500V15h9V5.500M7 7v6M10 7v6" fill="none" stroke="#a8a8a8" strokeWidth="1.300" /></FootIcon>
          </LayerFooter>

          <TabBar $h={24}>
            <Grip />
            <Tab>Text Styles</Tab>
            <Tab $active>Character</Tab>
            <Tab>Paragraph</Tab>
            <Menu />
          </TabBar>
          <CharBody>
            <CharRow>
              <Field $w={80} $pad={4} $bg="#434343">All Fonts<UpDown /></Field>
              <Field $l={3} $pad={4}>Futura LT Com<Drop><DownTri /></Drop></Field>
            </CharRow>
            <CharRow>
              <Field $w={80} $pad={2}>245.42 px<Drop><DownTri /></Drop></Field>
              <Field $w={186} $l={3} $pad={4} $bg="#434343">Bold<UpDown /></Field>
              <Swatch $c="#348a78" $w={21} $h={19} $l={4} />
              <NoFill width="21" height="19" viewBox="0 0 21 19">
                <rect width="21" height="19" fill="#fff" />
                <path d="M0 19L21 0" stroke="#f0606c" strokeWidth="1.500" />
              </NoFill>
            </CharRow>
            <CharRow>
              <Field $pad={2}>[No Style]<Drop><DownTri /></Drop></Field>
            </CharRow>
          </CharBody>
          <Expanders>
            <ExpanderRow>Decorations</ExpanderRow>
            <ExpanderRow>Positioning and Transform</ExpanderRow>
            <ExpanderRow>Typography</ExpanderRow>
            <ExpanderRow>Language</ExpanderRow>
            <ExpanderRow>Optical Alignment</ExpanderRow>
          </Expanders>

          <TabBar $h={22}>
            <Grip />
            <Tab>Swatches</Tab>
            <Tab>Color</Tab>
            <Tab>Stroke</Tab>
            <Tab>Constraints</Tab>
            <Menu />
          </TabBar>
          <TabBar $h={24}>
            <Grip />
            <Tab $active>Transform</Tab>
            <Tab>Navigator</Tab>
            <Tab>History</Tab>
          </TabBar>
          <TransformBody>
            <RefPoint width="41" height="42" viewBox="0 0 41 42">
              <rect x="5" y="7" width="32" height="31" fill="#6e6e6e" />
              {[6, 22, 38].flatMap(x => [6, 22, 38].map(y => (
                <rect key={`${x}${y}`} x={x - 2.500} y={y - 2.500} width="5" height="5" fill="#b4b4b4" />
              )))}
              <rect x="0" y="1" width="9" height="9" fill="#fff" />
            </RefPoint>
            <Fields>
              <AxisLabel>X:</AxisLabel>
              <Field $w={60}>40.16 px</Field>
              <AxisLabel>W:</AxisLabel>
              <Field $w={60}>133.77 px</Field>
              <AxisLabel>Y:</AxisLabel>
              <Field $w={60}>80 px</Field>
              <AxisLabel>H:</AxisLabel>
              <Field $w={60}>126 px</Field>
              <AxisLabel $off $low>R:</AxisLabel>
              <LowField $c="#777">0 °<DownTri c="#888" /></LowField>
              <AxisLabel $off $low>S:</AxisLabel>
              <LowField $c="#777">0 °<DownTri c="#888" /></LowField>
            </Fields>
            <LinkIcon>
              <svg width="6" height="14" viewBox="0 0 6 14">
                <rect x=".7" y=".7" width="4.600" height="6" rx="2.300" fill="none" stroke="#888" />
                <rect x=".7" y="7" width="4.600" height="6" rx="2.300" fill="none" stroke="#888" />
              </svg>
            </LinkIcon>
          </TransformBody>
        </Panels>
      </Main>

      <StatusBar>
        <b>Click</b> an object to select it. <b>Click</b>+<Shift /> to add to selection. <b>Drag</b> to marquee select nodes. <b>Drag</b>+<i>⌥</i> to begin lasso node selection. <b>Click</b>+<i>⌥</i> to begin polygon node selection. <b>Drag</b>+<Shift /> to add nodes to selection. <b>Drag</b>+<Shift />
      </StatusBar>
    </Window>
  );
}
